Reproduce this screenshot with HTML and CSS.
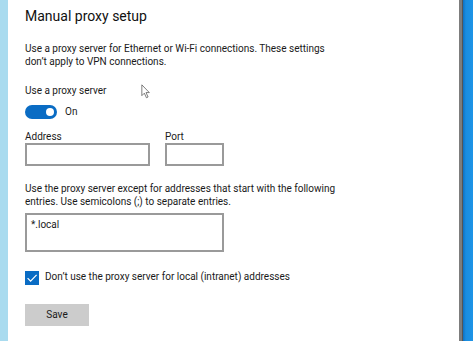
FILE: index.html
```html
<!DOCTYPE html>
<html lang="en">
<head>
  <meta charset="UTF-8">
  <title>Manual proxy setup</title>
  <link rel="stylesheet" href="styles.css">
</head>
<body>
  <div class="edge-left"></div>

  <div class="panel">
    <h1>Manual proxy setup</h1>
    <p class="note">Use a proxy server for Ethernet or Wi-Fi connections. These settings<br>don’t apply to VPN connections.</p>

    <div class="label">Use a proxy server</div>
    <div class="toggle-row">
      <span class="toggle"><span class="knob"></span></span>
      <span>On</span>
    </div>

    <div class="fields">
      <div class="field">
        <div class="label">Address</div>
        <div class="box address"></div>
      </div>
      <div class="field">
        <div class="label">Port</div>
        <div class="box port"></div>
      </div>
    </div>

    <p class="note">Use the proxy server except for addresses that start with the following<br>entries. Use semicolons (;) to separate entries.</p>
    <div class="box exceptions">*.local</div>

    <div class="check-row">
      <span class="checkbox">
        <svg width="14" height="14" viewBox="0 0 14 14"><path d="M2.6 7.2 L5.6 10.2 L11.6 3.8" fill="none" stroke="#fff" stroke-width="1.2"/></svg>
      </span>
      <span class="check-label">Don’t use the proxy server for local (intranet) addresses</span>
    </div>

    <div class="save-btn">Save</div>

    <svg class="cursor" width="10" height="15" viewBox="0 0 12 18">
      <path d="M1 1 L1 14 L4 11 L6.5 16.5 L8.5 15.6 L6 10.3 L10 10.3 Z" fill="#fff" stroke="#555" stroke-width="0.9"/>
    </svg>
  </div>

  <div class="edge-right"></div>
</body>
</html>
```

FILE: styles.css
```css
body {
  margin: 0;
  height: 341px;
  display: flex;
  background-color: #fff;
  font-family: Roboto, "Noto Sans", sans-serif;
  font-size: 10px;
  color: #1a1a1a;
  overflow: hidden;
}

.edge-left {
  width: 8px;
  background-color: #a9dbef;
}

.edge-right {
  width: 11px;
  border-left: 3px solid #7d7d7d;
  box-shadow: inset 1px 0 0 #555;
  background: linear-gradient(to right, #0b66b6, #1a8de0 35%, #1e93e6);
}

.panel {
  flex: 1;
  position: relative;
  padding-left: 17px;
}

h1 {
  margin: 5px 0 0;
  font-size: 14px;
  font-weight: normal;
  line-height: 22px;
  color: #111;
}

.note {
  margin: 15px 0 0;
  line-height: 13px;
}

.label {
  line-height: 14px;
}

.note + .label {
  margin-top: 16px;
}

.toggle-row {
  display: flex;
  align-items: center;
  gap: 8px;
  margin-top: 7px;
  height: 14px;
  line-height: 14px;
}

.toggle {
  display: flex;
  align-items: center;
  justify-content: flex-end;
  width: 32px;
  height: 14px;
  border-radius: 7px;
  background-color: #0a6cc4;
  padding-right: 3px;
  box-sizing: border-box;
}

.knob {
  width: 8px;
  height: 8px;
  border-radius: 50%;
  background-color: #fff;
}

.fields {
  display: flex;
  gap: 15px;
  margin-top: 11px;
}

.field .label {
  line-height: 13px;
}

.box {
  border: 2px solid #9a9a9a;
  box-sizing: border-box;
  background-color: #fff;
}

.address {
  width: 125px;
  height: 23px;
}

.port {
  width: 59px;
  height: 23px;
}

.fields + .note {
  margin-top: 16px;
}

.exceptions {
  width: 199px;
  height: 39px;
  margin-top: 5px;
  padding: 3px 0 0 4px;
  line-height: 14px;
}

.check-row {
  display: flex;
  align-items: center;
  gap: 6px;
  margin-top: 19px;
  height: 14px;
}

.checkbox {
  display: flex;
  width: 14px;
  height: 14px;
  background-color: #0a6cc4;
}

.check-label {
  line-height: 14px;
  margin-top: -2px;
}

.save-btn {
  width: 64px;
  height: 22px;
  margin-top: 19px;
  background-color: #cccccc;
  text-align: center;
  line-height: 22px;
}

.cursor {
  position: absolute;
  left: 133px;
  top: 84px;
}
```
